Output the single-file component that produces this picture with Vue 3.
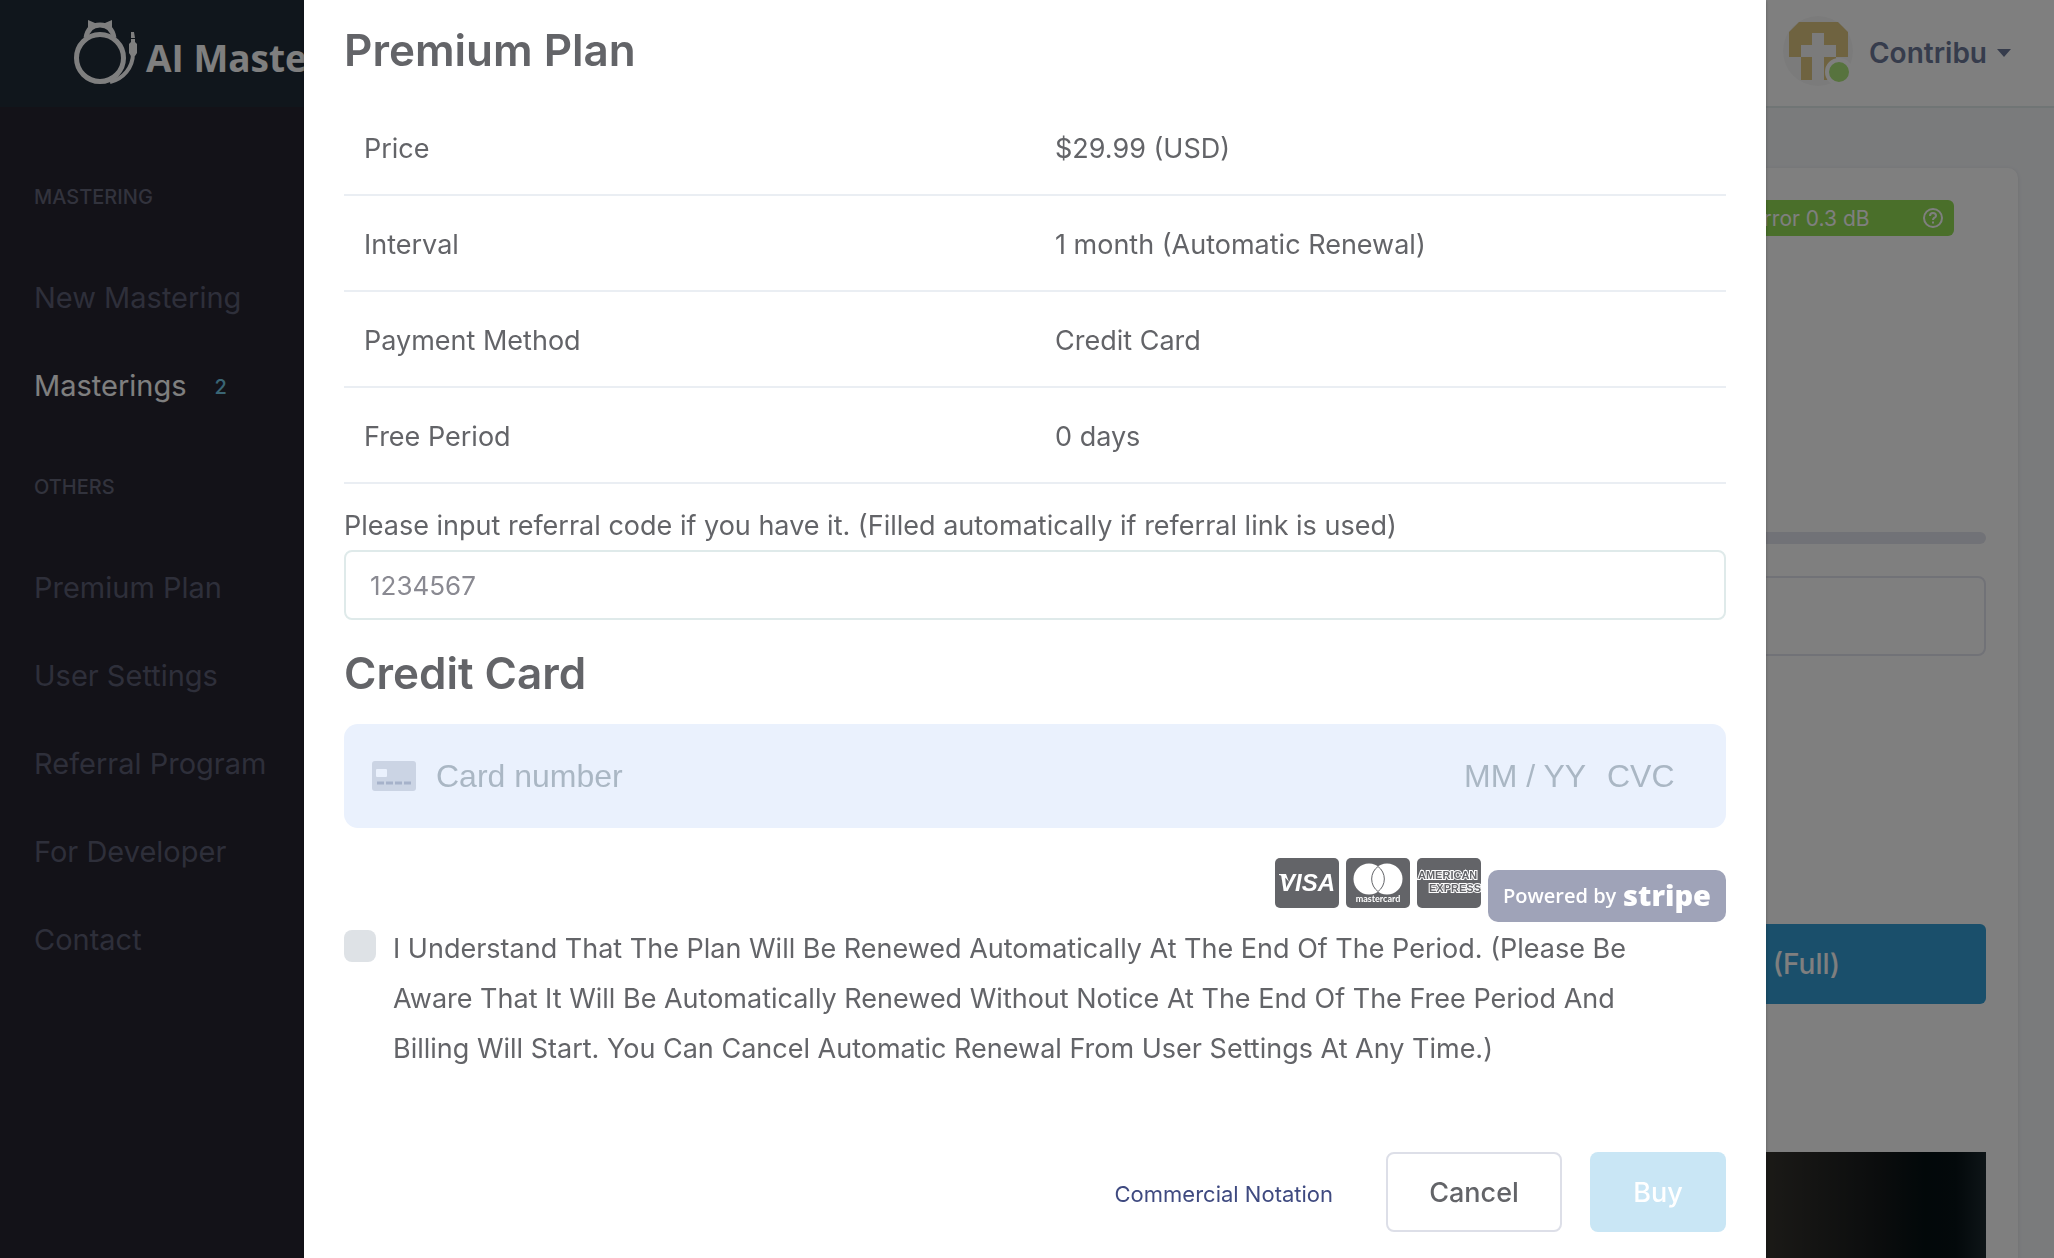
<script setup>
import { ref } from 'vue'

const rows = [
  ['Price', '$29.99 (USD)'],
  ['Interval', '1 month (Automatic Renewal)'],
  ['Payment Method', 'Credit Card'],
  ['Free Period', '0 days'],
]
const groups = [
  { title: 'Mastering', items: [{ text: 'New Mastering' }, { text: 'Masterings', active: true, count: 2 }] },
  {
    title: 'Others',
    items: [
      { text: 'Premium Plan' },
      { text: 'User Settings' },
      { text: 'Referral Program' },
      { text: 'For Developer' },
      { text: 'Contact' },
    ],
  },
]
const agreed = ref(false)
</script>

<template>
  <div class="shell">
    <aside class="sidebar">
      <a class="brand" href="#">
        <svg class="brand-mark" viewBox="0 0 64 66" aria-hidden="true">
          <g fill="none" stroke="#fff">
            <circle cx="26" cy="38" r="23.500" stroke-width="5" />
            <path d="M12 18Q14 5 26 5Q38 5 40 18" stroke-width="5" />
            <path d="M59 33C59 48 49 59 36 62" stroke-width="4" />
          </g>
          <path d="M14 0L21 3H31L38 0V9L26 6L14 9ZM57 12H60L61 18H57ZM57 19H61V22L63 24V33L61 36H57L55 33V24L57 22Z" fill="#fff" />
        </svg>
        <span class="brand-name">AI Maste</span>
      </a>
      <nav>
        <section v-for="g in groups" :key="g.title" class="group">
          <h2>{{ g.title }}</h2>
          <a v-for="i in g.items" :key="i.text" href="#" :class="{ active: i.active }">
            {{ i.text }}<span v-if="i.count" class="count">{{ i.count }}</span>
          </a>
        </section>
      </nav>
    </aside>

    <div class="page">
      <header class="topbar">
        <div class="avatar">
          <svg viewBox="0 0 70 70" aria-hidden="true">
            <circle cx="35" cy="35" r="35" fill="#f7f7f7" />
            <path d="M16 6H55L65 16V41H53V64H41V41H53V29H41V17H29V29H18V41H29V64H18V41H6V16Z" fill="#dec780" />
          </svg>
          <span class="status"></span>
        </div>
        <button class="user" type="button">Contribu<span class="caret"></span></button>
      </header>
      <main class="card">
        <div class="error"><span>Error 0.3 dB</span>
          <svg viewBox="0 0 20 20" aria-hidden="true">
            <circle cx="10" cy="10" r="9" />
            <path d="M7 8Q7 5 10 5T13 8Q13 9 11 10Q10 11 10 12M10 13.500V15.500" />
          </svg>
        </div>
        <div class="track"></div>
        <div class="field"></div>
        <button class="download" type="button">(Full)</button>
        <div class="cover"></div>
      </main>
    </div>
  </div>

  <div class="backdrop">
    <div class="modal" role="dialog" aria-labelledby="plan-title">
      <h1 id="plan-title">Premium Plan</h1>
      <table>
        <tbody>
          <tr v-for="r in rows" :key="r[0]">
            <th scope="row">{{ r[0] }}</th>
            <td>{{ r[1] }}</td>
          </tr>
        </tbody>
      </table>
      <label class="code-label" for="code">Please input referral code if you have it. (Filled automatically if referral link is used)</label>
      <input id="code" class="code" type="text" placeholder="1234567" />

      <h1>Credit Card</h1>
      <div class="cc">
        <svg class="cc-icon" viewBox="0 0 44 30" aria-hidden="true">
          <rect width="44" height="30" rx="3" fill="#cbd4e4" />
          <rect x="4" y="8" width="11" height="8" rx="1" fill="#eaf1fd" />
          <path d="M5 22H39" stroke="#a6b2ca" stroke-width="3" stroke-dasharray="7 2" />
        </svg>
        <input class="number" type="text" placeholder="Card number" aria-label="Card number" />
        <input class="expiry" type="text" placeholder="MM / YY" aria-label="Expiry date" />
        <input class="cvc" type="text" placeholder="CVC" aria-label="CVC" />
      </div>

      <div class="brands">
        <svg class="pay" viewBox="0 0 64 50" role="img" aria-label="Visa">
          <rect width="64" height="50" rx="5" fill="#636468" />
          <text x="4" y="33" class="visa">VISA</text>
          <path d="M4 16H11L14 24Q10 18 4 17Z" fill="#fff" />
        </svg>
        <svg class="pay" viewBox="0 0 64 50" role="img" aria-label="Mastercard">
          <rect width="64" height="50" rx="5" fill="#636468" />
          <circle cx="23" cy="21" r="15.500" fill="#fff" />
          <circle cx="41" cy="21" r="15.500" fill="#fff" />
          <path d="M32 8.500A15.500 15.500 0 0 1 32 33.500A15.500 15.500 0 0 1 32 8.500Z" fill="#fff" stroke="#636468" />
          <text x="32" y="44" class="mc">mastercard</text>
        </svg>
        <svg class="pay" viewBox="0 0 64 50" role="img" aria-label="American Express">
          <rect width="64" height="50" rx="5" fill="#636468" />
          <text x="1" y="21" class="amex">AMERICAN</text>
          <text x="12" y="34" class="amex">EXPRESS</text>
        </svg>
        <a class="stripe" href="#">Powered by <b>stripe</b></a>
      </div>

      <div class="agree">
        <input id="agree" v-model="agreed" type="checkbox" />
        <label for="agree">I Understand That The Plan Will Be Renewed Automatically At The End Of The Period. (Please Be Aware That It Will Be Automatically Renewed Without Notice At The End Of The Free Period And Billing Will Start. You Can Cancel Automatic Renewal From User Settings At Any Time.)</label>
      </div>

      <footer>
        <a href="#">Commercial Notation</a>
        <button class="cancel" type="button">Cancel</button>
        <button class="buy" type="button" :disabled="!agreed">Buy</button>
      </footer>
    </div>
  </div>
</template>

<style>
body {
  background: #f4f6f9;
  overflow: hidden;
}
</style>

<style scoped>
.shell,
.backdrop {
  font-family: Inter, "Liberation Sans", sans-serif;
  font-size: 27px;
  color: #636468;
}
.shell *,
.backdrop * {
  box-sizing: border-box;
}
button,
input {
  font: inherit;
}
a {
  text-decoration: none;
}
.shell {
  display: flex;
  height: 100vh;
  overflow: hidden;
}
.sidebar {
  flex: 0 0 400px;
  background: #262431;
}
.brand {
  display: flex;
  gap: 8px;
  height: 107px;
  padding: 20px 0 0 74px;
  background: #202c39;
  color: #fff;
}
.brand-mark {
  width: 64px;
  height: 66px;
}
.brand-name {
  font: 700 37px/76px "Open Sans", sans-serif;
  white-space: nowrap;
}
nav {
  padding: 60px 34px;
}
.group h2 {
  margin: 0;
  padding-bottom: 26px;
  font-size: 20px;
  font-weight: 500;
  line-height: 60px;
  text-transform: uppercase;
  color: #64667a;
}
.group a {
  display: flex;
  align-items: center;
  gap: 28px;
  height: 88px;
  font-size: 29px;
  color: #5c5e74;
}
.group a:last-child {
  margin-bottom: 28px;
}
.group .active {
  color: #fff;
}
.count {
  padding-top: 4px;
  font-size: 20px;
  font-weight: 500;
  color: #74cbe8;
}
.page {
  flex: 1;
  display: flex;
  flex-direction: column;
}
.topbar {
  flex: none;
  display: flex;
  justify-content: flex-end;
  align-items: center;
  gap: 16px;
  height: 108px;
  padding: 0 43px 4px 0;
  background: #fff;
  border-bottom: 2px solid #e0eaea;
}
.avatar {
  position: relative;
  width: 70px;
  height: 70px;
}
.avatar svg {
  display: block;
}
.status {
  position: absolute;
  right: 0;
  bottom: 0;
  width: 28px;
  height: 28px;
  border: 4px solid #fff;
  border-radius: 50%;
  background: #aee77c;
}
.user {
  display: flex;
  align-items: center;
  gap: 10px;
  padding: 3px 0 0;
  border: 0;
  background: none;
  font-size: 28px;
  font-weight: 600;
  color: #6c7899;
}
.caret {
  border: 7px solid transparent;
  border-top: 8px solid;
  border-bottom: 0;
}
.card {
  flex: 1;
  display: flex;
  flex-direction: column;
  align-items: flex-end;
  margin: 60px 36px 0 36px;
  padding: 32px;
  background: #fff;
  border-radius: 10px 10px 0 0;
  box-shadow: 0 1px 4px rgba(0, 0, 0, 0.1);
}
.error {
  display: flex;
  align-items: center;
  justify-content: space-between;
  width: 240px;
  height: 36px;
  margin: 0 32px 296px 0;
  padding: 0 11px 0 37px;
  border-radius: 6px;
  background: #94de55;
  color: #fff;
  font-size: 21px;
}
.error svg {
  width: 20px;
  height: 20px;
  fill: none;
  stroke: #fff;
  stroke-width: 2;
}
.track {
  width: 100%;
  height: 12px;
  margin-bottom: 32px;
  border-radius: 6px;
  background: #e3e4ee;
}
.field {
  width: 100%;
  height: 80px;
  margin-bottom: 268px;
  border: 2px solid #e3e4ee;
  border-radius: 8px;
}
.download {
  height: 80px;
  margin-bottom: 148px;
  padding: 0 146px;
  border: 0;
  border-radius: 6px;
  background: #349ed6;
  color: #fff;
  font-size: 28px;
  font-weight: 500;
}
.cover {
  width: 100%;
  flex: 0 0 200px;
  background: linear-gradient(to right, #34322d 86%, #161a1b 93%, #041013 96%, #071216 98%, #1c2a30);
}

.backdrop {
  position: fixed;
  inset: 0;
  overflow: hidden;
  padding: 0 288px 0 304px;
  background: rgba(0, 0, 0, 0.5);
}
.modal {
  min-height: 100%;
  padding: 16px 40px;
  background: #fff;
  box-shadow: 0 1px 3px rgba(0, 0, 0, 0.3);
}
h1 {
  margin: 0;
  font-size: 44px;
  font-weight: 600;
  line-height: 68px;
}
table {
  width: 100%;
  margin-top: 15px;
  table-layout: fixed;
  border-collapse: collapse;
}
th,
td {
  height: 96px;
  padding: 3px 20px 0;
  border-bottom: 2px solid #eaeef3;
  text-align: left;
  font-weight: 400;
}
.code-label {
  display: block;
  margin-top: 18px;
  line-height: 48px;
}
.code {
  display: block;
  width: 100%;
  height: 70px;
  margin-bottom: 19px;
  padding: 0 24px;
  border: 2px solid #dfeaea;
  border-radius: 8px;
  font-size: 26px;
}
.code::placeholder {
  color: #8a8a92;
}
.cc {
  display: flex;
  align-items: center;
  height: 104px;
  margin: 17px 0 30px;
  padding: 0 52px 0 28px;
  border-radius: 14px;
  background: #eaf1fd;
}
.cc-icon {
  width: 44px;
  height: 30px;
  margin-right: 20px;
}
.cc input {
  padding: 0;
  border: 0;
  background: none;
  font: 32px "Liberation Sans", sans-serif;
}
.cc input::placeholder {
  color: #aab7c4;
}
.number {
  flex: 1;
}
.expiry {
  width: 143px;
}
.cvc {
  width: 67px;
}
.brands {
  display: flex;
  justify-content: flex-end;
  gap: 7px;
  height: 64px;
}
.pay {
  width: 64px;
  height: 50px;
}
.visa {
  font: italic 700 24px "Liberation Sans", sans-serif;
  fill: #fff;
}
.mc {
  font: 700 9px Lato, sans-serif;
  text-anchor: middle;
  fill: #fff;
}
.amex {
  font: 700 11px "Liberation Sans", sans-serif;
  fill: #636468;
  stroke: #fff;
  stroke-width: 2px;
  paint-order: stroke;
}
.stripe {
  display: flex;
  align-items: center;
  justify-content: space-between;
  align-self: flex-end;
  width: 238px;
  height: 52px;
  padding: 0 15px 2px;
  border-radius: 10px;
  background: #9fa3b8;
  color: #fff;
  font: 600 20px "Open Sans", sans-serif;
}
.stripe b {
  font-size: 29px;
  font-weight: 800;
  line-height: 40px;
}
.agree {
  display: flex;
  align-items: flex-start;
  gap: 17px;
  margin: 2px 0 78px;
  padding-right: 40px;
}
.agree input {
  appearance: none;
  flex: none;
  width: 32px;
  height: 32px;
  margin: 6px 0 0;
  border-radius: 8px;
  background: #dee2e6;
}
.agree label {
  line-height: 50px;
}
footer {
  display: flex;
  justify-content: flex-end;
  align-items: center;
}
footer a {
  margin-right: 53px;
  padding-top: 3px;
  font-size: 22px;
  color: #3f4a80;
}
footer button {
  height: 80px;
  border-radius: 8px;
  font-weight: 500;
}
.cancel {
  width: 176px;
  margin-right: 28px;
  border: 2px solid #dddfe8;
  background: #fff;
  color: #636468;
}
.buy {
  width: 136px;
  border: 0;
  background: #c9e6f5;
  color: #fff;
}
</style>
